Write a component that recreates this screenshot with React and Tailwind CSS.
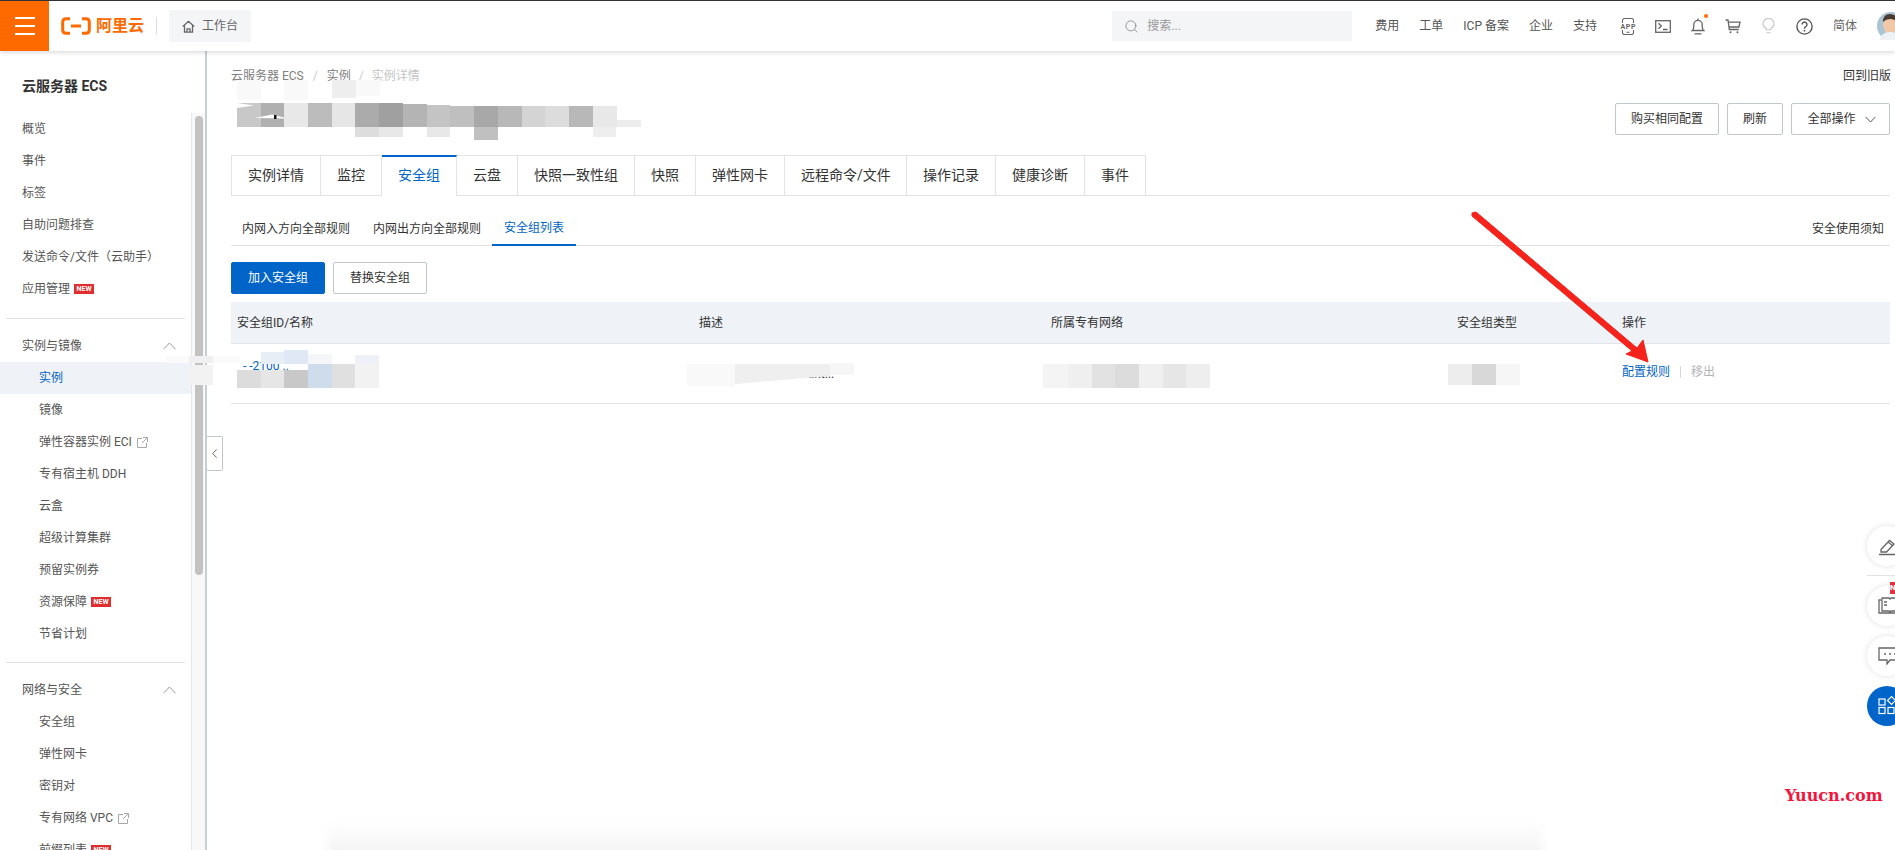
import React from "react";
import { Search, ChevronLeft } from "lucide-react";

const font = { fontFamily: 'Roboto, "Noto Sans CJK SC", sans-serif' };

function Ext() {
  return (
    <svg width="11" height="11" viewBox="0 0 11 11" fill="none" stroke="#a8a8a8" strokeWidth="1" className="ml-[5px]">
      <path d="M5 1.5H.5v9h9V6M6 .5h4.5V5M10.5.5 5 6" />
    </svg>
  );
}
function New() {
  return <span className="ml-[4px] w-[20px] h-[10px] bg-[#e02e2e] text-white text-[7px] font-bold leading-[10px] text-center">NEW</span>;
}
function Item({ children, active, sub }) {
  return (
    <div className={"h-[32px] flex items-center text-[12px] " + (sub ? "pl-[39px] " : "pl-[22px] ") + (active ? "bg-[#eff2f7] text-[#0064c8]" : "text-[#555]")}>
      {children}
    </div>
  );
}
function Group({ children }) {
  return (
    <div className="h-[32px] flex items-center justify-between pl-[22px] pr-[15px] text-[12px] text-[#555]">
      <span>{children}</span>
      <svg width="13" height="8" viewBox="0 0 13 8" fill="none" stroke="#999" strokeWidth="1">
        <path d="M.5 7.2 6.5 1l6 6.2" />
      </svg>
    </div>
  );
}
function Sidebar() {
  return (
    <aside className="w-[207px] shrink-0 flex overflow-hidden border-r-2 border-[#c8ced6]">
      <nav className="w-[191px] shrink-0">
        <div className="h-[62px] pt-[9px] pb-[1px] pl-[22px] flex items-center text-[14px] font-bold text-[#333]">云服务器 ECS</div>
        <Item>概览</Item>
        <Item>事件</Item>
        <Item>标签</Item>
        <Item>自助问题排查</Item>
        <Item>发送命令/文件（云助手）</Item>
        <Item>应用管理<New /></Item>
        <div className="mt-[13px] mb-[11px] mx-[6px] h-px bg-[#e3e3e3]" />
        <Group>实例与镜像</Group>
        <Item sub active>实例</Item>
        <Item sub>镜像</Item>
        <Item sub>弹性容器实例 ECI<Ext /></Item>
        <Item sub>专有宿主机 DDH</Item>
        <Item sub>云盒</Item>
        <Item sub>超级计算集群</Item>
        <Item sub>预留实例券</Item>
        <Item sub>资源保障<New /></Item>
        <Item sub>节省计划</Item>
        <div className="mt-[12px] mb-[11px] mx-[6px] h-px bg-[#e3e3e3]" />
        <Group>网络与安全</Group>
        <Item sub>安全组</Item>
        <Item sub>弹性网卡</Item>
        <Item sub>密钥对</Item>
        <Item sub>专有网络 VPC<Ext /></Item>
        <Item sub>前缀列表<New /></Item>
      </nav>
      <div className="flex-1 mt-[62px] bg-[#f8f8f8] border-l border-[#e6e6e6] pt-[3px] pl-[3px]">
        <div className="w-[8px] h-[459px] rounded-full bg-[#c2c2c2]" />
      </div>
    </aside>
  );
}

function Header() {
  const links = ["费用", "工单", "ICP 备案", "企业", "支持"];
  return (
    <header className="relative z-20 h-[51px] shrink-0 flex items-center bg-white border-t border-[#333] shadow-[0_1px_5px_rgba(0,0,0,0.18)] overflow-hidden">
      <div className="w-[49px] h-[50px] bg-[#ff6a00] flex flex-col justify-center gap-[6px] items-center">
        <span className="w-[20px] h-[2px] bg-white" />
        <span className="w-[20px] h-[2px] bg-white" />
        <span className="w-[20px] h-[2px] bg-white" />
      </div>
      <svg width="30" height="18" viewBox="0 0 30 18" className="ml-[12px]" fill="none" stroke="#ff6a00" strokeWidth="3.4">
        <path d="M9 1.7H5Q1.7 1.7 1.7 5v8q0 3.3 3.3 3.3h4M21 1.7h4q3.3 0 3.3 3.3v8q0 3.3-3.3 3.3h-4M10 9h10" strokeWidth="3" />
      </svg>
      <span className="ml-[5px] text-[16px] leading-[20px] font-bold text-[#ff6a00] w-[51px]">阿里云</span>
      <span className="ml-[9px] w-px h-[18px] bg-[#ddd]" />
      <div className="ml-[12px] w-[82px] h-[32px] rounded-[2px] bg-[#f4f5f7] flex items-center pl-[13px] text-[12px] text-[#666]">
        <svg width="13" height="13" viewBox="0 0 13 13" fill="none" stroke="#666" strokeWidth="1.3">
          <path d="M.8 6.4 6.5 1.3l5.7 5.1M2.5 5.4v6.8h8V5.4M5 12V8.8h3V12" />
        </svg>
        <span className="ml-[7px]">工作台</span>
      </div>
      <div className="ml-auto mr-[23px] w-[240px] h-[30px] bg-[#f4f5f7] flex items-center pl-[12px] text-[12px] text-[#999]">
        <Search size={15} strokeWidth={1} color="#666" />
        <span className="ml-[8px]">搜索...</span>
      </div>
      <div className="flex items-center gap-[20px] text-[12px] text-[#555]">
        {links.map((l) => <span key={l}>{l}</span>)}
      </div>
      <svg width="16" height="17" viewBox="0 0 16 17" fill="none" stroke="#666" strokeWidth="1.1" className="ml-[23px]">
        <path d="M2.5 5V2.5a2 2 0 0 1 2-2h7a2 2 0 0 1 2 2V5M2.5 12v2.5a2 2 0 0 0 2 2h7a2 2 0 0 0 2-2V12M6.5 14.2h3" />
        <text x="8" y="11" fontSize="7" fontWeight="bold" fill="#666" stroke="none" textAnchor="middle" textLength="15">APP</text>
      </svg>
      <svg width="16" height="13" viewBox="0 0 16 13" fill="none" stroke="#666" className="ml-[19px]" strokeWidth="1.3">
        <rect x=".7" y=".7" width="14.6" height="11.6" />
        <path d="m3.5 3.2 2.8 2.8-2.8 2.8M8 9.5h4.5" />
      </svg>
      <div className="relative ml-[20px] w-[14px] h-[17px]">
        <svg width="14" height="17" viewBox="0 0 14 17" fill="none" stroke="#666" strokeWidth="1.3">
          <path d="M7 .5v1.6M1.2 12.5c1.2-1 1.6-2 1.6-4V6.6a4.2 4.2 0 0 1 8.400 0v1.900c0 2 .4 3 1.600 4ZM3.500 15.800h7" />
        </svg>
        <span className="absolute right-[-3px] top-[-4px] w-[4px] h-[4px] rounded-full bg-[#ff6a00]" />
      </div>
      <svg width="16" height="15" viewBox="0 0 16 15" fill="none" stroke="#666" strokeWidth="1.3" className="ml-[20px]">
        <path d="M.5 1h2.500l1.300 9.500h9.500M3.300 3.200H15l-1.100 4.800H4" />
        <circle cx="5.500" cy="13.300" r="1" fill="#666" stroke="none" />
        <circle cx="12.500" cy="13.300" r="1" fill="#666" stroke="none" />
      </svg>
      <svg width="13" height="16" viewBox="0 0 13 16" fill="none" stroke="#c8c8c8" strokeWidth="1.100" className="ml-[21px]">
        <path d="M4.200 11.800v-1.300C2.600 9.500 1 8 1 5.900a5.500 5.500 0 0 1 11 0c0 2.100-1.600 3.600-3.200 4.600v1.300ZM4.500 14.800h4" />
      </svg>
      <svg width="17" height="17" viewBox="0 0 17 17" fill="none" stroke="#555" strokeWidth="1.400" className="ml-[21px]">
        <circle cx="8.500" cy="8.500" r="7.600" />
        <path d="M6 6.600a2.500 2.500 0 1 1 3.800 2.100c-.9.500-1.300 1-1.300 2" />
        <circle cx="8.500" cy="12.700" r=".9" fill="#555" stroke="none" />
      </svg>
      <span className="ml-[20px] text-[12px] text-[#666]">简体</span>
      <svg width="28" height="28" viewBox="0 0 28 28" className="ml-[20px] mr-[-10px] shrink-0">
        <circle cx="14" cy="14" r="14" fill="#a9c4d4" />
        <ellipse cx="13" cy="13" rx="7" ry="9" fill="#f0c8a8" />
        <path d="M6 10Q6 2 13 2t8 8q-4-3-8-3t-7 3Z" fill="#4a3a32" />
        <path d="M3 28q1-8 10-8t11 8Z" fill="#eef2f5" />
      </svg>
    </header>
  );
}

function Btn({ children, primary, w }) {
  return (
    <div className={"h-[32px] rounded-[2px] flex items-center justify-center text-[12px] border " + w + " " + (primary ? "bg-[#0064c8] border-[#0064c8] text-white" : "bg-white border-[#c0c6cc] text-[#333]")}>
      {children}
    </div>
  );
}

function Tabs() {
  const tabs = ["实例详情", "监控", "安全组", "云盘", "快照一致性组", "快照", "弹性网卡", "远程命令/文件", "操作记录", "健康诊断", "事件"];
  return (
    <div className="mt-[20px] h-[41px] flex border-b border-[#e3e3e3]">
      {tabs.map((t, i) => (
        <div
          key={t}
          className={
            "h-[41px] px-4 flex items-center text-[14px] border-r whitespace-nowrap " +
            (i === 0 ? "border-l " : "") +
            (i === 7 ? "w-[122px] " : "") +
            (i === 2
              ? "bg-white text-[#0064c8] border-r-[#e3e3e3] border-t-2 border-t-[#0064c8] pb-[2px] w-[75px]"
              : "border-t border-b border-[#e3e3e3] text-[#333]")
          }
        >
          {t}
        </div>
      ))}
    </div>
  );
}

function SubTabs() {
  return (
    <div className="mt-[16px] h-[34px] flex items-stretch border-b border-[#e3e3e3] text-[12px] text-[#333]">
      <div className="w-[131px] pl-[11px] flex items-center">内网入方向全部规则</div>
      <div className="w-[130px] pl-[11px] flex items-center">内网出方向全部规则</div>
      <div className="w-[84px] flex items-center justify-center text-[#0064c8] border-b-2 border-[#0064c8] h-[34px]">安全组列表</div>
      <div className="ml-auto pr-[6px] flex items-center">安全使用须知</div>
    </div>
  );
}

function Table() {
  const cols = "grid grid-cols-[462px_352px_406px_165px_1fr] pl-[6px] items-center";
  return (
    <div className="mt-[8px] text-[12px] text-[#333]">
      <div className={cols + " h-[42px] bg-[#eff2f7] border-b border-[#e3e6ea]"}>
        <div>安全组ID/名称</div>
        <div>描述</div>
        <div>所属专有网络</div>
        <div>安全组类型</div>
        <div>操作</div>
      </div>
      <div className={cols + " h-[60px] border-b border-[#e3e3e3]"}>
        <div className="mb-[15px] pl-[6px] text-[#0064c8]">- -2100 ..</div>
        <div className="pl-[102px]">nant...</div>
        <div />
        <div />
        <div className="flex items-center mb-[3px]">
          <span className="text-[#0064c8]">配置规则</span>
          <span className="mx-[10px] w-px h-[12px] bg-[#d8d8d8]" />
          <span className="text-[#b4b4b4]">移出</span>
        </div>
      </div>
    </div>
  );
}

const blur = [
  [237, 103, 24, 24, "#c8c8c8"], [261, 103, 23, 24, "#b0b0b0"], [284, 103, 24, 24, "#e8e8e8"], [308, 103, 24, 24, "#bcbcbc"],
  [332, 103, 23, 24, "#e6e6e6"], [355, 103, 24, 24, "#ababab"], [379, 103, 24, 24, "#a0a0a0"], [403, 104, 24, 23, "#b4b4b4"],
  [427, 105, 23, 22, "#c4c4c4"], [450, 106, 24, 21, "#bfbfbf"], [474, 106, 24, 21, "#a8a8a8"], [498, 106, 24, 21, "#b8b8b8"],
  [522, 106, 23, 21, "#d4d4d4"], [545, 106, 24, 21, "#dcdcdc"], [569, 106, 24, 21, "#b8b8b8"], [593, 106, 24, 21, "#e8e8e8"],
  [617, 120, 24, 7, "#ececec"], [355, 127, 24, 10, "#dddddd"], [379, 127, 24, 10, "#e8e8e8"], [427, 127, 23, 10, "#e8e8e8"],
  [474, 127, 24, 13, "#c0c0c0"], [593, 127, 23, 10, "#eeeeee"], [237, 80, 24, 20, "#f9f9f9"], [284, 80, 24, 20, "#f9f9f9"],
  [332, 80, 24, 18, "#eeeeee"], [356, 80, 24, 16, "#f9f9f9"],
  [237, 370, 24, 18, "#dcdcdc"], [261, 370, 23, 18, "#e6e6e6"], [284, 370, 24, 18, "#c8c8c8"], [308, 364, 24, 24, "#cfdcec"],
  [332, 364, 23, 24, "#e0e0e0"], [355, 364, 24, 24, "#f2f2f2"], [261, 352, 23, 12, "#e8eef6"], [284, 350, 24, 14, "#dfe8f4"],
  [308, 354, 24, 10, "#f4f6fa"], [355, 355, 24, 9, "#eef2f8"], [687, 364, 48, 22, "#f9f9f9"],
  [830, 363, 24, 12, "#f6f6f6"], [1043, 364, 25, 24, "#f4f4f4"], [1068, 364, 24, 24, "#efefef"], [1092, 364, 23, 24, "#e2e2e2"],
  [1115, 364, 24, 24, "#dcdcdc"], [1139, 364, 24, 24, "#f0f0f0"], [1163, 364, 23, 24, "#e6e6e6"], [1186, 364, 24, 24, "#eeeeee"],
  [1448, 364, 24, 21, "#ededed"], [1472, 364, 24, 21, "#d8d8d8"], [1496, 364, 24, 21, "#f6f6f6"],
  [166, 356, 74, 7, "#fafafa"], [189, 356, 24, 7, "#f0f0f0"], [189, 365, 24, 20, "#f2f2f2"],
];

function Overlay() {
  return (
    <svg width="1895" height="850" viewBox="0 0 1895 850" className="absolute left-0 top-0 z-10 pointer-events-none">
      {blur.map(([x, y, w, h, c], i) => <rect key={i} x={x} y={y} width={w} height={h} fill={c} />)}
      <path d="M735 364H830V376L735 384Z" fill="#efefef" />
      <path d="M237 103 254 105.500 237 108ZM255 118 272 114.500 284 117.500 284 118.500Z" fill="#fff" />
      <rect x="274" y="115" width="2.500" height="4" fill="#111" />
      <path d="M1472 213 1476 212 1637 348 1643 340 1648 362 1626 354 1632 351 1472 216Z" fill="#f5231c" stroke="#f5231c" strokeWidth="1" />
    </svg>
  );
}

function Float() {
  const circle = "w-[40px] h-[40px] rounded-full flex items-center pl-[11px] shrink-0 ";
  const white = circle + "bg-white shadow-[0_0_6px_rgba(0,0,0,0.12)] ";
  return (
    <div className="absolute z-10 left-[1867px] top-[526px] w-[40px] flex flex-col items-start">
      <div className={white}>
        <svg width="20" height="20" viewBox="0 0 20 20" fill="none" stroke="#666" strokeWidth="1.300">
          <path d="m3 13.500 8.500-9 4.500 3.500-7.500 8H3ZM1 18.500h19M10 6l4.500 3.500" />
        </svg>
      </div>
      <div className="mt-[9px] w-[40px] h-px bg-[#e2e2e2]" />
      <div className={white + "mt-[10px] relative"}>
        <svg width="24" height="18" viewBox="0 0 24 18" fill="none" stroke="#666" strokeWidth="1.300">
          <path d="M3 3H1v13h22V3h-2M4 1h7l1 1 1-1h7v13h-7l-1 1-1-1H4ZM6 5h3M6 8h3" />
        </svg>
        <span className="absolute left-[23px] top-[-4px] w-[8px] h-[12px] bg-[#d9363e] text-white text-[8px] font-bold leading-[12px] overflow-hidden">N</span>
      </div>
      <div className={white + "mt-[10px]"}>
        <svg width="24" height="18" viewBox="0 0 24 18" fill="none" stroke="#666" strokeWidth="1.300">
          <path d="M1 1h22v12H12l-3 4v-4H1Z" />
          <path d="M6 7h2M11 7h2M16 7h2" strokeWidth="1.600" />
        </svg>
      </div>
      <div className={circle + "mt-[10px] bg-[#0064c8]"}>
        <svg width="20" height="22" viewBox="0 0 20 22" fill="none" stroke="#fff" strokeWidth="1.200">
          <rect x="1" y="4" width="6" height="6" />
          <rect x="1" y="12.500" width="6" height="6" />
          <rect x="10" y="12.500" width="6" height="6" />
          <path d="m13.500 1.500 4 4-4 4-4-4Z" />
        </svg>
      </div>
    </div>
  );
}

export default function App() {
  return (
    <div className="relative w-[1895px] h-[850px] overflow-hidden bg-white flex flex-col" style={font}>
      <Header />
      <div className="flex-1 flex min-h-0">
        <Sidebar />
        <main className="relative flex-1 pl-[24px] pr-[5px]">
          <div className="mt-[15px] h-[20px] flex items-center justify-between text-[12px]">
            <div className="flex items-center text-[#808080]">
              <span>云服务器 ECS</span>
              <span className="mx-[9px] text-[#ccc]">/</span>
              <span>实例</span>
              <span className="mx-[8px] text-[#ccc]">/</span>
              <span className="text-[#c4c4c4]">实例详情</span>
            </div>
            <span className="text-[#333] mr-[-1px]">回到旧版</span>
          </div>
          <div className="mt-[17px] h-[32px] flex justify-end gap-[8px]">
            <Btn w="w-[104px]">购买相同配置</Btn>
            <Btn w="w-[56px]">刷新</Btn>
            <Btn w="w-[99px] gap-[9px]">
              <span className="ml-[2px]">全部操作</span>
              <svg width="11" height="7" viewBox="0 0 11 7" fill="none" stroke="#555" strokeWidth="1">
                <path d="M.5.800 5.500 6l5-5.200" />
              </svg>
            </Btn>
          </div>
          <Tabs />
          <SubTabs />
          <div className="mt-[16px] flex gap-[8px]">
            <Btn primary w="w-[94px]">加入安全组</Btn>
            <Btn w="w-[94px]">替换安全组</Btn>
          </div>
          <Table />
          <div className="absolute left-0 top-[385px] w-[16px] h-[35px] bg-white border border-l-0 border-[#c0c6cc] rounded-r-[2px] flex items-center justify-center">
            <ChevronLeft size={15} strokeWidth={1.300} color="#444" />
          </div>
        </main>
      </div>
      <Overlay />
      <Float />
      <span className="absolute z-10 left-[1785px] top-[784px] text-[16px] leading-[24px] font-bold text-[#f5143c]" style={{ fontFamily: '"DejaVu Serif", serif' }}>Yuucn.com</span>
      <div className="absolute left-[328px] top-[820px] w-[1214px] h-[45px] blur-[5px] bg-linear-to-b from-transparent to-[#efefef]" />
    </div>
  );
}
